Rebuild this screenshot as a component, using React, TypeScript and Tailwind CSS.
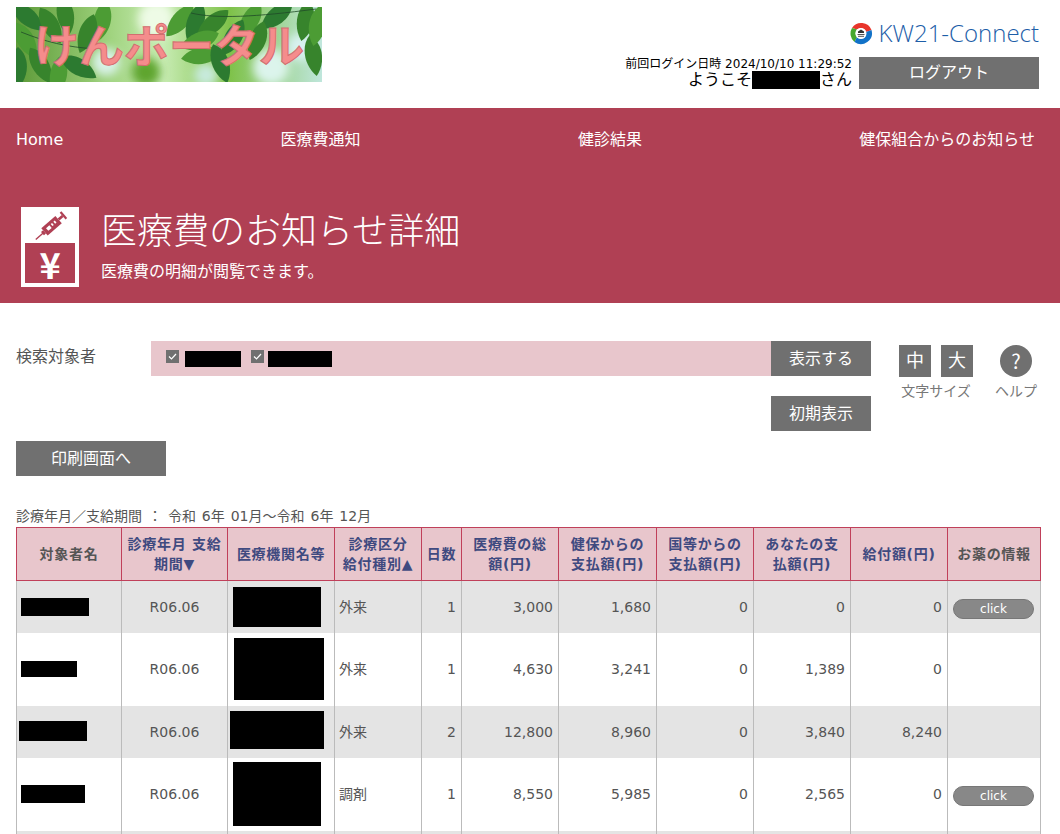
const COLS = [105, 106, 107, 87, 40, 97, 98, 97, 97, 97, 93];

const HEADERS = [
  { lines: ['対象者名'], link: false },
  { lines: ['診療年月 支給', '期間▼'], link: true },
  { lines: ['医療機関名等'], link: true },
  { lines: ['診療区分', '給付種別▲'], link: true },
  { lines: ['日数'], link: true },
  { lines: ['医療費の総', '額(円)'], link: true },
  { lines: ['健保からの', '支払額(円)'], link: true },
  { lines: ['国等からの', '支払額(円)'], link: true },
  { lines: ['あなたの支', '払額(円)'], link: true },
  { lines: ['給付額(円)'], link: true },
  { lines: ['お薬の情報'], link: false },
];

const ROWS = [
  { name: 'w-17 h-4.5 ml-1', org: 'w-22 h-10 ml-px', kind: '外来', days: '1', nums: ['3,000', '1,680', '0', '0', '0'], click: true, tall: false },
  { name: 'w-14 h-4 ml-1', org: 'w-22.5 h-15.5 ml-0.5', kind: '外来', days: '1', nums: ['4,630', '3,241', '0', '1,389', '0'], click: false, tall: true },
  { name: 'w-17 h-5 ml-0.5 mb-0.5', org: 'w-23.5 h-9.5 -ml-0.5 mb-1', kind: '外来', days: '2', nums: ['12,800', '8,960', '0', '3,840', '8,240'], click: false, tall: false },
  { name: 'w-16 h-4.5 ml-1', org: 'w-22 h-16 ml-px', kind: '調剤', days: '1', nums: ['8,550', '5,985', '0', '2,565', '0'], click: true, tall: true },
];

const LEAVES = [
  [49, 8, 80], [86, 13, 100], [11, 10, 40], [34, 18, 60], [9, 33, 60], [2, 60, 90], [24, 58, 60], [42, 68, 100], [62, 60, 30], [71, 26, 110],
  [164, 13, 130], [179, 15, 110], [197, 16, 140], [234, 13, 120], [261, 8, 140], [289, 13, 100], [184, 33, 160], [217, 30, 120], [241, 33, 110],
  [186, 48, 170], [204, 56, 70], [297, 48, 80], [301, 18, 100],
];

function PortalLogo() {
  return (
    <svg viewBox="0 0 306 75" className="w-[306px] h-[75px] shrink-0">
      <defs>
        <linearGradient id="bg" x1="0" x2="1" y1="0" y2="0">
          <stop offset="0" stopColor="#5d9a38" />
          <stop offset="0.3" stopColor="#9ed27c" />
          <stop offset="0.48" stopColor="#c8ecb4" />
          <stop offset="0.7" stopColor="#7fc24a" />
          <stop offset="1" stopColor="#bfe6dc" />
        </linearGradient>
        <filter id="soft"><feGaussianBlur stdDeviation="5" /></filter>
        <clipPath id="box"><rect width="306" height="75" /></clipPath>
      </defs>
      <g clipPath="url(#box)">
        <rect width="306" height="75" fill="url(#bg)" />
        <g filter="url(#soft)">
          <circle cx="140" cy="12" r="18" fill="#eefbe6" />
          <circle cx="90" cy="55" r="14" fill="#d8f2e8" />
          <circle cx="190" cy="68" r="12" fill="#c8eadc" />
          <circle cx="255" cy="60" r="18" fill="#dcf4ec" />
          <circle cx="130" cy="65" r="14" fill="#5ea52e" />
          <circle cx="285" cy="40" r="14" fill="#d8f2f0" />
        </g>
        {LEAVES.map(([x, y, r], i) => (
          <path
            key={i}
            transform={`translate(${x} ${y}) rotate(${r}) scale(1.25)`}
            d="M-16 0C-8 -10 8 -9 17 0C8 8 -8 9 -16 0Z"
            fill={i % 3 === 0 ? '#37842c' : i % 3 === 1 ? '#4c9c34' : '#2c7a30'}
          />
        ))}
        <path d="M175 6C200 12 240 10 300 2M5 25C30 35 50 40 80 42" stroke="#1f4a28" strokeWidth="0.8" fill="none" />
        <text
          x="153"
          y="56"
          textAnchor="middle"
          fontSize="45"
          fontWeight="700"
          fontFamily="'Noto Sans CJK JP',sans-serif"
          fill="#f58c8c"
          stroke="#d26e70"
          strokeWidth="1"
        >
          けんポータル
        </text>
      </g>
    </svg>
  );
}

function ConnectLogo() {
  return (
    <div className="flex items-center gap-1.5 h-7 mr-px">
      <svg viewBox="0 0 24 24" className="w-6 h-6">
        <path d="M3 7A11 11 0 0 1 22.5 9L17 11A5.5 5.5 0 0 0 8 8.5Z" fill="#e8352b" />
        <path d="M3 7L8 8.5A5.5 5.5 0 0 0 8 16L5.5 21A11 11 0 0 1 3 7Z" fill="#46a82e" />
        <path d="M5.5 21L8 16A5.5 5.5 0 0 0 17 11L22.5 9A11 11 0 0 1 5.5 21Z" fill="#1272c8" />
        <circle cx="12" cy="12.5" r="5.5" fill="#fff" />
        <path d="M9 10.5L12 8.5L15 10.5V12H9Z" fill="#333" />
        <rect x="8.5" y="13" width="7" height="1" fill="#555" />
        <rect x="9" y="14.8" width="6" height="1" fill="#555" />
      </svg>
      <span className="font-['Open_Sans',sans-serif] text-2xl font-light text-[#1d5ea8]">KW21-Connect</span>
    </div>
  );
}

function PageIcon() {
  return (
    <div className="w-[58px] h-20 bg-white p-1 flex flex-col shrink-0">
      <svg viewBox="0 0 50 36" className="w-full h-9">
        <g transform="translate(9 32) rotate(-41)" fill="#b04054">
          <rect x="0" y="-0.8" width="11" height="1.6" />
          <rect x="10" y="-2.5" width="3" height="5" />
          <rect x="13" y="-5.5" width="21" height="11" />
          <rect x="34" y="-1.5" width="6" height="3" />
          <rect x="40" y="-5" width="2.5" height="10" />
          <rect x="17" y="-2" width="5" height="4" fill="#fff" />
          <rect x="24" y="-2" width="2" height="3" fill="#fff" />
          <rect x="28" y="-2" width="2" height="3" fill="#fff" />
        </g>
      </svg>
      <div className="flex-1 bg-[#b04054] text-white text-4xl font-['Noto_Sans_CJK_JP',sans-serif] font-bold flex items-center justify-center">¥</div>
    </div>
  );
}

const grayBtn = 'h-[35px] bg-[#707070] text-white text-base flex items-center justify-center';
const bodyCell = 'border-x border-[#bbb]';
const numCell = 'border-x border-[#bbb] pr-[5px] text-right';

function CheckBox() {
  return (
    <span className="w-[13px] h-[13px] bg-[#707070] flex items-center justify-center shrink-0">
      <svg viewBox="0 0 13 13" className="w-[13px] h-[13px]">
        <path d="M3 6.5L5.5 9L10 4" stroke="#fff" strokeWidth="1.2" fill="none" />
      </svg>
    </span>
  );
}

export default function App() {
  return (
    <div className="h-[834px] overflow-hidden bg-white text-[#555] font-['DejaVu_Sans','Noto_Sans_CJK_JP',sans-serif]">
      {/* ヘッダー */}
      <header className="h-27 flex justify-between pl-4 pr-5 pt-[7px]">
        <PortalLogo />
        <div className="flex flex-col items-end pt-3">
          <ConnectLogo />
          <div className="flex gap-[7px] mt-2.5 h-8 mr-px">
            <div className="text-right text-black">
              <div className="text-xs leading-3.5">前回ログイン日時 2024/10/10 11:29:52</div>
              <div className="text-base leading-4 flex justify-end items-center">
                ようこそ<span className="w-17 h-4.5 bg-black inline-block" />さん
              </div>
            </div>
            <button className="w-45 bg-[#707070] text-white text-base">ログアウト</button>
          </div>
        </div>
      </header>

      {/* ナビ + タイトル */}
      <section className="bg-[#b04054] text-white h-[195px]">
        <nav className="flex justify-between pl-4 pr-6 mr-px pt-5 text-base leading-6">
          <a>Home</a>
          <a>医療費通知</a>
          <a>健診結果</a>
          <a>健保組合からのお知らせ</a>
        </nav>
        <div className="flex items-start gap-5.5 pl-5 ml-px mt-[55px]">
          <PageIcon />
          <div className="pt-[5px]">
            <h1 className="text-4xl leading-10 font-light">医療費のお知らせ詳細</h1>
            <p className="text-base leading-6 mt-2">医療費の明細が閲覧できます。</p>
          </div>
        </div>
      </section>

      <main className="pl-4 pr-5 pt-9.5">
        {/* 検索 */}
        <div className="flex">
          <div className="w-[135px] text-base leading-8">検索対象者</div>
          <div className="w-[720px]">
            <div className="flex">
              <div className="flex-1 h-[35px] bg-[#e8c6cc] flex items-start gap-1.5 pl-[15px] pt-2">
                <span className="mt-px"><CheckBox /></span>
                <span className="w-14 h-4 mt-0.5 bg-black" />
                <span className="ml-1 mt-px"><CheckBox /></span>
                <span className="w-16 h-4 mt-0.5 -ml-0.5 bg-black" />
              </div>
              <button className={`${grayBtn} w-25`}>表示する</button>
            </div>
            <div className="flex justify-end mt-5">
              <button className={`${grayBtn} w-25`}>初期表示</button>
            </div>
          </div>
          <div className="flex gap-5.5 ml-7 mt-1">
            <div className="flex flex-col items-center">
              <div className="flex gap-2.5">
                <button className="w-8 h-8 bg-[#707070] text-white text-lg">中</button>
                <button className="w-8 h-8 bg-[#707070] text-white text-lg">大</button>
              </div>
              <span className="text-sm leading-5 mt-1 text-[#777]">文字サイズ</span>
            </div>
            <div className="flex flex-col items-center">
              <div className="w-8 h-8 rounded-full bg-[#707070] text-white text-xl font-['Noto_Sans_CJK_JP',sans-serif] flex items-center justify-center">?</div>
              <span className="text-sm leading-5 mt-1 text-[#777]">ヘルプ</span>
            </div>
          </div>
        </div>

        <button className={`${grayBtn} w-[150px] mt-2.5`}>印刷画面へ</button>

        <p className="text-sm leading-5 mt-7.5 mb-px [word-spacing:1.5px]">診療年月／支給期間 ： 令和 6年 01月～令和 6年 12月</p>

        {/* 明細テーブル */}
        <table className="w-full table-fixed border-collapse text-sm">
          <colgroup>
            {COLS.map((w, i) => <col key={i} style={{ width: w }} />)}
          </colgroup>
          <thead>
            <tr className="bg-[#e8c6cc] h-[53px]">
              {HEADERS.map(h => (
                <th
                  key={h.lines[0]}
                  className={`border border-[#c0405a] leading-5 font-bold tracking-wider whitespace-nowrap ${h.link ? 'text-[#3f4a80]' : 'text-[#555]'}`}
                >
                  {h.lines.map(line => <div key={line}>{line}</div>)}
                </th>
              ))}
            </tr>
          </thead>
          <tbody>
            {ROWS.map((r, i) => (
              <tr key={i} className={`${r.tall ? 'h-[73px]' : 'h-13'} ${i % 2 === 0 ? 'bg-[#e4e4e4]' : 'bg-white'}`}>
                <td className={bodyCell}><div className={`${r.name} bg-black`} /></td>
                <td className={`${bodyCell} text-center`}>R06.06</td>
                <td className={`${bodyCell} px-1`}><div className={`${r.org} bg-black`} /></td>
                <td className={`${bodyCell} px-1`}>{r.kind}</td>
                <td className={numCell}>{r.days}</td>
                {r.nums.map((n, j) => (
                  <td key={j} className={numCell}>{n}</td>
                ))}
                <td className={`${bodyCell} pl-[5px] pr-1.5`}>
                  {r.click && (
                    <div className="h-5 mt-1 rounded-full bg-[#888] border border-[#777] text-white text-xs flex items-center justify-center">click</div>
                  )}
                </td>
              </tr>
            ))}
            <tr className="h-13 bg-[#e4e4e4]">
              {COLS.map((w, i) => <td key={i} className={bodyCell} />)}
            </tr>
          </tbody>
        </table>
      </main>
    </div>
  );
}
